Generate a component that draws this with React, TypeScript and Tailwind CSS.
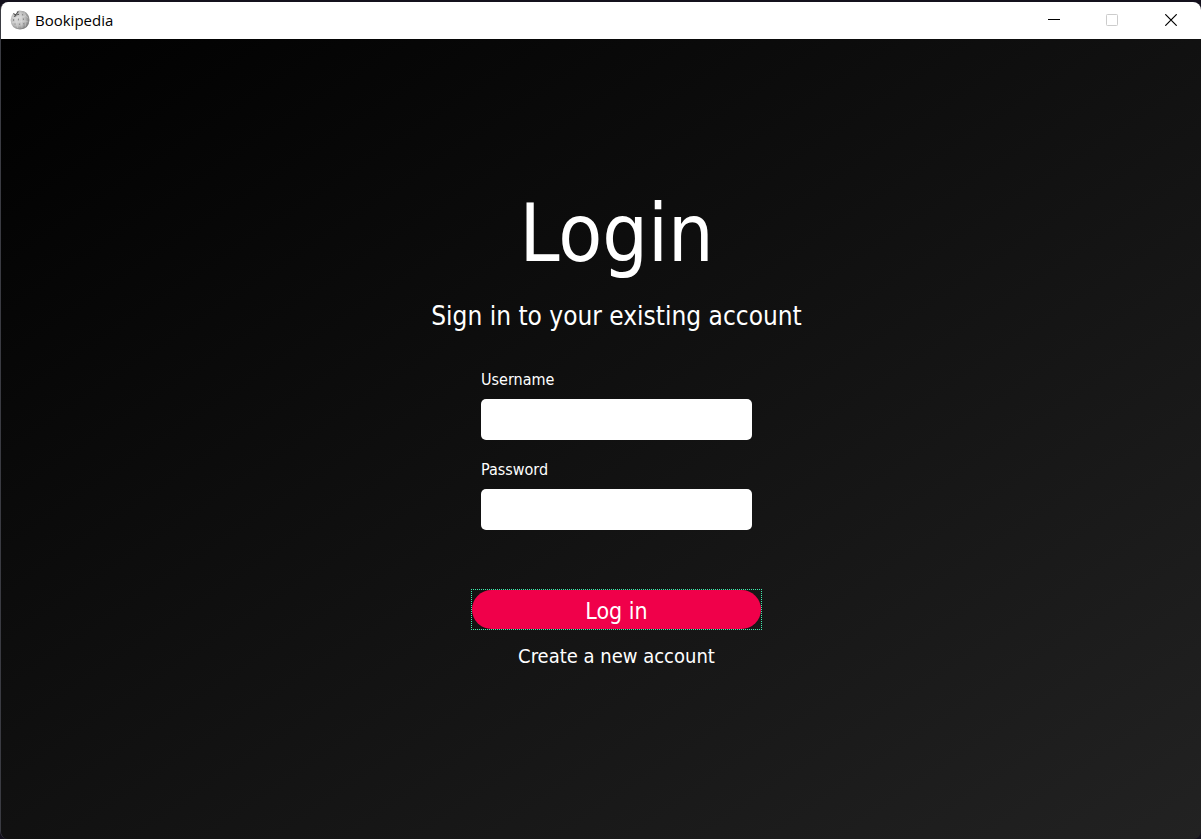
import React from "react";

function GlobeIcon() {
  return (
    <svg width="20" height="20" viewBox="0 0 20 20" aria-hidden="true">
      <defs>
        <radialGradient id="globe" cx="0.38" cy="0.42" r="0.65">
          <stop offset="0" stopColor="#dedede" />
          <stop offset="0.6" stopColor="#bdbdbd" />
          <stop offset="1" stopColor="#777" />
        </radialGradient>
      </defs>
      <path
        d="M3.2 3.2 5 4.2 6 5 7.5 3.4 6.6 1.6 9.2.6 14 1.2Q19.4 4 19.5 10 19 19 10 19.4 1 19 .6 10 .8 6 3.2 3.2Z"
        fill="url(#globe)"
      />
      <path d="M3.4 3.4 5.6 5.2 8.4 1.4M4 6.4 6.4 5.5M7.2 4.8 9 4.2" fill="none" stroke="#555" strokeWidth="1.1" />
      <path
        d="M2 7.5 5.6 8.2 6 12 2 12.6M6 7.8Q9 6.6 11 7.2L11.5 11.4Q9 12.6 6 12M11 7.2 15.6 6 18.4 8M11.5 11.4 16 11 18.6 12.2M11 7 10.6 2.5M6.4 12.2 7.6 18M11.6 11.6 12 18M15.6 6 14.2 2.2M16 11.2 15.4 16.6"
        fill="none"
        stroke="#e9e9e9"
        strokeWidth="0.35"
      />
      <path d="M3.6 9v2M8.4 8.6v1.8M13.4 8.4v1.6M9.6 13.6v1.2M13.8 13v1.4M12.6 4v1.4M5 13.6v1" stroke="#808080" strokeWidth="0.9" />
    </svg>
  );
}

function TitleBar() {
  return (
    <header className="flex h-[37px] shrink-0 items-center bg-white pb-px pl-[9px]">
      <GlobeIcon />
      <span className="ml-[5px] flex-1 font-['Open_Sans',sans-serif] text-[15px] leading-5 text-black">Bookipedia</span>
      <button type="button" aria-label="Minimize" className="flex h-full w-[58px] items-center justify-center">
        <svg width="12" height="12" viewBox="0 0 12 12">
          <path d="M0 5.5h12" stroke="#000" />
        </svg>
      </button>
      <button type="button" aria-label="Maximize" disabled className="flex h-full w-[58px] items-center justify-center">
        <svg width="12" height="12" viewBox="0 0 12 12">
          <rect x="0.5" y="0.5" width="11" height="11" rx="0.8" fill="none" stroke="#ccc" />
        </svg>
      </button>
      <button type="button" aria-label="Close" className="flex h-full w-[60px] items-center justify-center">
        <svg width="12" height="12" viewBox="0 0 12 12">
          <path d="M0.3 0.3 11.7 11.7M11.7 0.3 0.3 11.7" stroke="#000" strokeWidth="1.2" />
        </svg>
      </button>
    </header>
  );
}

function Field({ id, label, type }: { id: string; label: string; type: string }) {
  return (
    <div className="flex flex-col gap-[9px]">
      <label htmlFor={id} className="text-[16px] leading-5">
        {label}
      </label>
      <input id={id} type={type} className="h-[41px] w-full rounded-[5px] bg-white px-2 text-[16px] text-black outline-none" />
    </div>
  );
}

export default function App() {
  return (
    <div className="flex min-h-screen bg-[#14111d] pt-[2px]">
      <div className="flex flex-1 flex-col overflow-hidden rounded-[8px] border-l border-[#3a3b42]">
        <TitleBar />
        <main className="flex flex-1 flex-col items-center bg-linear-to-br/srgb from-black to-[#222222] pt-[147px] pl-[31px] font-['DejaVu_Sans_Condensed','DejaVu_Sans',sans-serif] text-white">
          <h1 className="text-[80px] leading-[96px]">Login</h1>
          <p className="mt-[18px] text-[26px] leading-8">Sign in to your existing account</p>
          <form className="mt-[38px] flex w-[291px] flex-col" onSubmit={(e) => e.preventDefault()}>
            <div className="flex flex-col gap-5 px-[10px]">
              <Field id="username" label="Username" type="text" />
              <Field id="password" label="Password" type="password" />
            </div>
            <button type="submit" className="mt-[59px] h-[41px] border border-dotted border-[#3df0b0] text-[23px] leading-7">
              <span className="flex h-full items-center justify-center rounded-full bg-[#f0004a] pt-[2px]">Log in</span>
            </button>
            <a href="#create" className="mt-3 text-center text-[20px] leading-7">
              Create a new account
            </a>
          </form>
        </main>
      </div>
    </div>
  );
}
